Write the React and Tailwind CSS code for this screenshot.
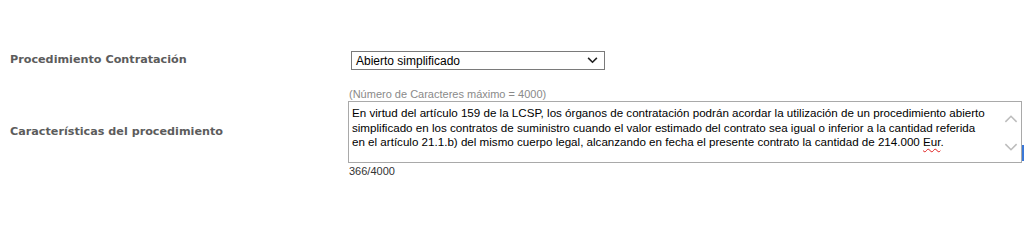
import React from "react";

const font = { fontFamily: "'Liberation Sans', Arial, sans-serif" };

const Label = ({ children }) => {
  return (
    <div className="w-[338px] shrink-0 text-[11.2px] font-bold text-[#5c5c5c] font-['DejaVu_Sans',Verdana,sans-serif]">
      {children}
    </div>
  );
};

const Chevron = ({ up, className, width = 1.4 }) => {
  return (
    <svg viewBox="0 0 12 8" className={className} fill="none">
      <path
        d={up ? "M1 7 L6 2 L11 7" : "M1 1 L6 6 L11 1"}
        stroke="currentColor"
        strokeWidth={width}
      />
    </svg>
  );
};

const Select = () => {
  return (
    <div className="w-[254px] h-[19px] border border-[#7a7a7a] bg-white flex items-center justify-between pl-[4px] pr-[6px] text-[12px] text-black font-['Liberation_Sans',Arial,sans-serif]">
      <span>Abierto simplificado</span>
      <Chevron className="w-[11px] h-[7px] text-[#222]" width={1.8} />
    </div>
  );
};

const TextArea = () => {
  return (
    <div className="flex items-end">
      <div className="w-[674px] h-[62px] border border-[#a9a9a9] bg-white flex">
        <div
          className="flex-1 pl-[3px] pt-[4px] text-[11.6px] leading-[14.5px] text-black"
          style={font}
        >
          <div>
            En virtud del artículo 159 de la LCSP, los órganos de contratación podrán acordar la utilización de un procedimiento abierto
          </div>
          <div>
            simplificado en los contratos de suministro cuando el valor estimado del contrato sea igual o inferior a la cantidad referida
          </div>
          <div>
            en el artículo 21.1.b) del mismo cuerpo legal, alcanzando en fecha el presente contrato la cantidad de 214.000{" "}
            <span className="underline decoration-wavy decoration-[#e02020] decoration-1 underline-offset-2">
              Eur
            </span>
            .
          </div>
        </div>
        <div className="w-[18px] flex flex-col items-center justify-between pt-[12px] pb-[10px] pr-[2px] text-[#bdbdbd]">
          <Chevron up className="w-[14px] h-[9px]" width={1.4} />
          <Chevron className="w-[14px] h-[9px]" width={1.4} />
        </div>
      </div>
      <div className="w-[3px] h-[16px] mb-[2px] bg-[#3a78d8]"></div>
    </div>
  );
};

export default function App() {
  return (
    <div className="w-[1024px] h-[224px] bg-white pl-[10px] pt-[51px]">
      <div className="flex items-center">
        <Label>Procedimiento Contratación</Label>
        <div className="pl-[3px]">
          <Select />
        </div>
      </div>
      <div className="flex items-center mt-[17px]">
        <Label>Características del procedimiento</Label>
        <div className="flex flex-col">
          <div className="text-[11px] leading-[14px] text-[#8a8a8a] pl-[1px]" style={font}>
            (Número de Caracteres máximo = 4000)
          </div>
          <TextArea />
          <div className="text-[11px] leading-[14px] text-[#333] mt-[1px] pl-[1px]" style={font}>
            366/4000
          </div>
        </div>
      </div>
    </div>
  );
}
